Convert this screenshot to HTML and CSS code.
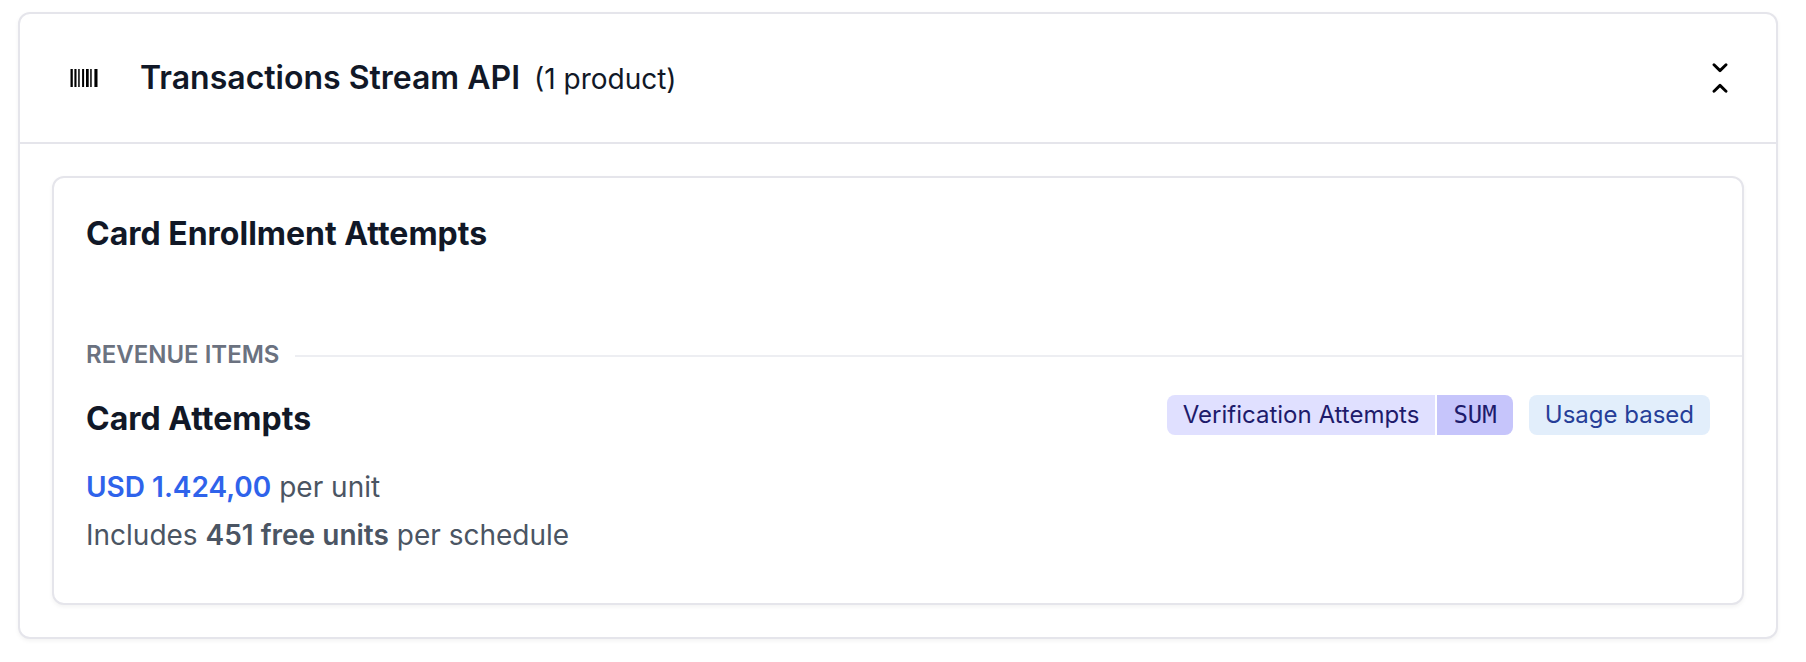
FILE: index.html
```html
<!DOCTYPE html>
<html lang="en">
<head>
<meta charset="utf-8">
<title>Transactions Stream API</title>
<link rel="stylesheet" href="styles.css">
</head>
<body>
<section class="card group">
  <header class="group-header">
    <span class="group-icon">
      <svg width="28" height="18" viewBox="0 0 28 18" aria-hidden="true">
        <path d="M.5 0H2.8V18H.5zM4.4 0H6.5V18H4.4zM8.2 0H9.7V18H8.2zM12.1 0H14.1V18H12.1zM16 0H18.7V18H16zM20.2 0H21.7V18H20.2zM24.4 0H27.5V18H24.4z"/>
      </svg>
    </span>
    <div class="group-title">
      <h1 class="heading">Transactions Stream API</h1>
      <span class="count">(1 product)</span>
    </div>
    <button class="toggle" type="button" aria-label="Collapse">
      <svg width="16" height="32" viewBox="0 0 16 32" fill="none" stroke="#000" stroke-width="2.9" stroke-linecap="round" stroke-linejoin="round" aria-hidden="true">
        <path d="M2 2.8 8 8.6l6-5.8M2 29.2 8 23.4l6 5.8"/>
      </svg>
    </button>
  </header>
  <div class="group-body">
    <article class="card product">
      <h2 class="heading strong">Card Enrollment Attempts</h2>
      <div class="divider">
        <h3 class="divider-label">REVENUE ITEMS</h3>
        <span class="divider-line"></span>
      </div>
      <div class="item">
        <div class="item-top">
          <h4 class="heading strong">Card Attempts</h4>
          <div class="badges">
            <span class="badge-pair">
              <span class="badge metric">Verification Attempts</span>
              <span class="badge aggregation">SUM</span>
            </span>
            <span class="badge pricing">Usage based</span>
          </div>
        </div>
        <div class="details">
          <p><span class="price">USD 1.424,00</span> per unit</p>
          <p>Includes <strong>451 free units</strong> per schedule</p>
        </div>
      </div>
    </article>
  </div>
</section>
</body>
</html>
```
FILE: styles.css
```css
* {
  box-sizing: border-box;
}

body {
  margin: 0;
  padding: 12px 28px 24px 18px;
  background: #fff;
  color: #111827;
  font-family: Inter, "Liberation Sans", sans-serif;
}

h1, h2, h3, h4, p {
  margin: 0;
}

.card {
  border: 2px solid #e5e5eb;
  border-radius: 12px;
  background: #fff;
  box-shadow: 0 2px 4px rgba(0, 0, 0, 0.05);
}

.group-header {
  display: flex;
  align-items: center;
  gap: 24px;
  padding: 32px;
  border-bottom: 2px solid #e5e5eb;
}

.group-icon {
  display: flex;
  align-items: center;
  justify-content: center;
  width: 64px;
  height: 64px;
}

.group-title {
  display: flex;
  flex: 1;
  align-items: baseline;
  gap: 14px;
}

.heading {
  font-size: 32px;
  font-weight: 600;
  line-height: 48px;
}

.strong {
  font-weight: 700;
}

.count {
  font-size: 28px;
  line-height: 40px;
}

.toggle {
  display: flex;
  align-items: center;
  justify-content: center;
  width: 48px;
  height: 48px;
  padding: 0;
  border: 0;
  background: none;
}

.group-body {
  padding: 32px;
}

.product {
  padding: 32px 0 44px 32px;
}

.divider {
  display: flex;
  align-items: center;
  gap: 16px;
  margin-top: 79px;
}

.divider-label {
  color: #6b7280;
  font-size: 24px;
  font-weight: 600;
  line-height: 36px;
}

.divider-line {
  flex: 1;
  height: 2px;
  margin-top: 2px;
  background: #edeef2;
}

.item {
  padding: 22px 32px 0 0;
}

.item-top {
  display: flex;
  align-items: flex-start;
  justify-content: space-between;
}

.badges {
  display: flex;
  gap: 16px;
}

.badge-pair {
  display: flex;
  gap: 2px;
  overflow: hidden;
  border-radius: 8px;
}

.badge {
  padding: 0 16px;
  font-size: 24px;
  line-height: 40px;
}

.metric {
  background: #e0e0ff;
  color: #1e1b6b;
}

.aggregation {
  background: #c6c5fb;
  color: #1e1b6b;
  font-family: "DejaVu Sans Mono", monospace;
}

.pricing {
  border-radius: 8px;
  background: #e2eefb;
  color: #263e98;
}

.details {
  margin-top: 20px;
  color: #4b5563;
  font-size: 28px;
  line-height: 48px;
}

.details strong {
  font-weight: 600;
}

.price {
  color: #2f63eb;
  font-weight: 600;
}
```
